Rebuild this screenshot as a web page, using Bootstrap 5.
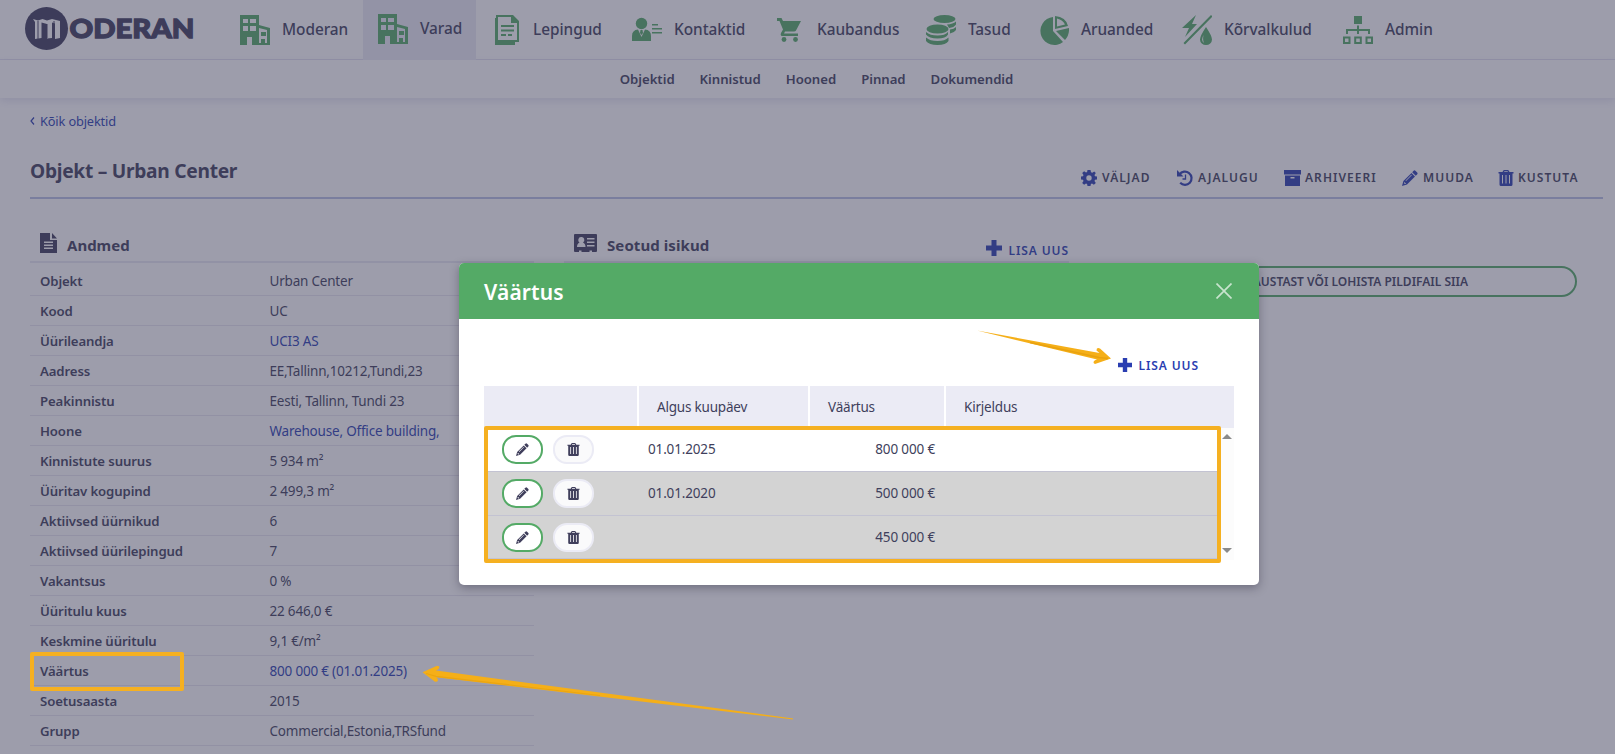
<!DOCTYPE html>
<html lang="et">
<head>
<meta charset="utf-8">
<title>Moderan</title>
<link href="https://cdn.jsdelivr.net/npm/bootstrap@5.3.0/dist/css/bootstrap.min.css" rel="stylesheet">
<style>
:root{--ink:#403f5c;--leaf:#54aa66;--royal:#2a3eb1;--rule:#e9e8f3;--amber:#f5b021}
body{font-family:"Noto Sans","Open Sans",sans-serif;font-size:13.5px;line-height:20px;color:var(--ink);background:#fff;height:754px;overflow:hidden;position:relative}
a{color:var(--royal);text-decoration:none}
svg{display:block;flex:none}
.topbar{height:60px;border-bottom:1px solid #e6e5f2}
.brand{width:225px;padding:7px 0 0 25px}
.mainnav{display:grid;grid-template-columns:138px 113px 141px 143px 151px 113px 143px 161px 121px;height:59px}
.mainnav a{display:flex;align-items:center;gap:12px;padding:0 0 1px 15px;color:var(--ink);font-weight:500;font-size:15.4px;letter-spacing:-.05px;white-space:nowrap}
.mainnav a.active{background:#eaebf5;height:60px;padding-bottom:2px}
.mainnav svg{fill:var(--leaf)}
.subnav{height:38px;padding-left:18px;gap:25px;box-shadow:0 3px 8px rgba(90,90,170,.16)}
.subnav a{color:var(--ink);font-weight:600;font-size:13.2px;letter-spacing:-.03px}
.content{padding:0 12px 0 30px}
.crumb{padding-top:13px;height:54px;font-size:12.8px;letter-spacing:-.15px}
.titlebar{height:47px;border-bottom:2px solid #b9c0e4}
.titlebar h1{font-size:19.2px;font-weight:700;line-height:24px;margin:7px 0 0;letter-spacing:-.28px}
.tools{padding:16px 25px 0 0}
.tools a,.addlink,.dropbtn{font-weight:600;font-size:12px;letter-spacing:.9px;color:var(--ink)}
.tools a{display:grid;grid-template-columns:16px 1fr;gap:5px;align-items:center;height:20px;white-space:nowrap;letter-spacing:1.05px}
.tools svg{fill:var(--royal)}
.panels{display:grid;grid-template-columns:504px 505px 478px;column-gap:30px;margin-top:34px}
.panel-head{height:30px;border-bottom:2px solid var(--rule);padding-left:10px;font-weight:700;font-size:15px}
.facts{margin:0;padding-top:3px}
.facts>div{height:30px;border-bottom:1px solid #e8e7f1;padding:5px 0 0 10px;display:flex}
.facts dt{width:229.5px;font-weight:600;font-size:13.2px;letter-spacing:-.12px}
.facts dd{margin:0;letter-spacing:-.2px}
.addlink.addlink{color:var(--royal)}
.dropbtn{height:31px;border:2px solid var(--leaf);border-radius:16px;margin-top:33px;letter-spacing:0;font-size:12px;padding:4px 0 0 144px;white-space:nowrap}
.backdrop-veil{position:absolute;inset:0;background:#3c3b57;opacity:.5}
.dialog-wrap{position:absolute;left:459px;top:263px;width:800px;height:322px;box-shadow:0 3px 10px rgba(30,28,50,.36);border-radius:5px;background:#fff;color:var(--ink)}
.dialog-head{background:var(--leaf);height:56px;border-radius:5px 5px 0 0;padding:0 27px 0 25px}
.dialog-head h2{font-size:21px;font-weight:600;color:#fff;margin:4px 0 0;letter-spacing:.15px}
.dialog-body{padding:36px 25px 0}
.dialog-body .addlink{height:20px;padding-right:35px;margin-bottom:11px}
.dialog-body .addlink span{padding:2px 0 0 6px}
.grid-head,.grid-row{display:grid}
.grid-head{gap:2px;height:42px;grid-template-columns:153px 169px 134px 1fr}
.grid-head>div{background:#ebebf5;padding:11px 0 0 18px;letter-spacing:-.2px}
.grid-row{height:44px;border-bottom:1px solid #c3c3d2;align-items:center;width:736px;padding-bottom:1px;letter-spacing:-.15px;grid-template-columns:164px 180px 107px 1fr}
.grid-row.past{background:#d3d3d3}
.grid-row:last-child{height:43px;padding-bottom:0}
.row-tools{display:flex;gap:10px;padding-left:18px}
.pill{width:41px;height:29px;border:2px solid var(--leaf);border-radius:14px;background:#fff;display:flex;align-items:center;justify-content:center;padding:0}
.pill.soft{border-color:#ebebf5;background:#fafafb}
.pill svg{fill:var(--ink)}
.scroller{width:14px;height:132px;background:#fcfcfc;padding:6px 0 7px 2px}
.ring{position:absolute;border:4px solid var(--amber);border-radius:2px}
.ring-grid{left:484px;top:426px;width:737px;height:137px}
.ring-fact{left:30px;top:652px;width:154px;height:39px}
.arrows{position:absolute;inset:0}
</style>
<script src="https://cdn.jsdelivr.net/npm/bootstrap@5.3.0/dist/js/bootstrap.bundle.min.js"></script>
</head>
<body>
<svg width="0" height="0" class="position-absolute">
<defs>
<symbol id="i-building" viewBox="0 0 30 30"><path fill-rule="evenodd" d="M0 0H19V10L30 13V30H12V22H7V30H0ZM3 4V8H8V4ZM10 4V8H16V4ZM3 11V16H8V11ZM10 11V16H16V11ZM19 13V28H21V24H25V28H27V15ZM21 17H26V21H21Z"/></symbol>
<symbol id="i-pencil" viewBox="0 0 16 16"><path fill-rule="evenodd" d="M11.600.8Q12.600-.1 13.600.9L15.200 2.500Q16 3.500 15.100 4.400L13.700 5.800 10.200 2.300ZM9.500 3 13 6.500 5 14.600 0 16 1.400 11ZM2.300 12 2 13.200 2.900 14 4.200 13.700ZM9.300 4.800 3.500 10.600 4 11.100 9.800 5.300Z"/></symbol>
<symbol id="i-trash" viewBox="0 0 16 16"><path fill-rule="evenodd" d="M4.500 2 5.300.5Q5.600 0 6.200 0H9.800Q10.400 0 10.700.5L11.500 2H15.500V3.500H14.500V14.500Q14.500 16 13 16H3Q1.500 16 1.500 14.500V3.500H.5V2ZM6 2H10L9.500 1.200H6.500ZM4 5V13.500H5V5ZM7.500 5V13.500H8.500V5ZM11 5V13.500H12V5Z"/></symbol>
<symbol id="i-plus" viewBox="0 0 16 16"><path d="M5.500 0H10.500V5.500H16V10.500H10.500V16H5.500V10.500H0V5.500H5.500Z"/></symbol>
</defs>
</svg>

<header>
<div class="topbar d-flex">
<div class="brand">
<svg width="172" height="44" viewBox="0 0 172 44"><circle cx="21.500" cy="21.500" r="21.500" fill="#3e3d5c"/><path fill="#fff" d="M8 12 13 13.500 17.500 12 22 13.500 27 12 35 14V31L30 32V16.500L27 15.500V31L22 31.500V17L16.500 15.500V31L10 32V15Z"/><path d="M13 14V32M22 17V31M29 14V31" stroke="#3e3d5c" stroke-width="1"/><text x="44.500" y="31" font-family="Lato,sans-serif" font-weight="900" font-size="27" textLength="125" lengthAdjust="spacingAndGlyphs" fill="#3e3d5c" stroke="#3e3d5c" stroke-width="1.300">ODERAN</text></svg>
</div>
<nav class="mainnav">
<a href="#"><svg width="30" height="30"><use href="#i-building"/></svg>Moderan</a>
<a href="#" class="active"><svg width="30" height="30"><use href="#i-building"/></svg>Varad</a>
<a href="#"><svg width="30" height="30" viewBox="0 0 30 30"><path fill-rule="evenodd" d="M5 0H22L28 6V27H24V30H4V3H5ZM7 2V25H26V8H20V2ZM10 10H23V12H10ZM10 14.500H23V16.500H10ZM10 19H15V21H10ZM17 19H21V21H17Z"/></svg>Lepingud</a>
<a href="#"><svg width="30" height="30" viewBox="0 0 30 30"><circle cx="9.500" cy="8.500" r="5.700"/><path d="M0 26V21Q0 15 6 14.500L9.500 22 13 14.500Q19 15 19 21V26ZM8.500 15H10.500L11 18 9.500 20 8 18ZM20 9H26V10.500H20ZM20 13H30V14.500H20ZM20 17H30V18.500H20Z"/></svg>Kontaktid</a>
<a href="#"><svg width="30" height="30" viewBox="2 0 30 30"><path fill-rule="evenodd" d="M4 3H8.500L10 6H28L23 15.500Q22.500 16.500 21 16.500H12L11 18.500H25V21H9Q7 20.500 8 18L10 14.500 6.500 6H4Z"/><circle cx="11" cy="24.500" r="2.400"/><circle cx="22.500" cy="24.500" r="2.400"/></svg>Kaubandus</a>
<a href="#"><svg width="30" height="30" viewBox="0 0 30 30"><ellipse cx="18.500" cy="4" rx="11" ry="4"/><ellipse cx="11.500" cy="14" rx="11" ry="4.500"/><path d="M0 17Q4 20.500 11.500 20.500T22 17V19.500Q20 23.500 11.500 23.500T0 19.500ZM0 22.500Q4 26 11.500 26T22.500 22.500V26Q20 30 11.500 30T0 26ZM21 9.500Q27 9 30 6.500V9.500Q28 12.500 23 13ZM24 14.500Q28 14 30 12V15Q28 18 24 18.500Z"/></svg>Tasud</a>
<a href="#"><svg width="30" height="30" viewBox="0 0 30 30"><path fill-rule="evenodd" d="M14 2V16L24 27A14 14 0 1 1 14 2ZM16 1Q27 2 29 11L16 14ZM18 3.500V11.500L26 9.500Q24 5 18 3.500ZM17 16 30 13Q30.500 20 26 25Z"/></svg>Aruanded</a>
<a href="#"><svg width="30" height="30" viewBox="0 0 30 30"><path fill-rule="evenodd" d="M14 0 10 9H15L3 22 7 13H0ZM29 0 30.500 1.500 3 29.500 1.500 28ZM24 12Q30 21 30 24.500A6 5.500 0 0 1 18 24.500Q18 21 24 12ZM21.500 20Q18.500 25.500 22 28 20.500 25 21.500 20Z"/></svg>Kõrvalkulud</a>
<a href="#"><svg width="30" height="30" viewBox="0 0 30 30"><path fill-rule="evenodd" d="M11 1H19V9H11ZM14 10.500H16V14H27V19H25V16H16V19H14V16H5V19H3V14H14ZM0 21.500H7.500V29H0ZM2 23.500V27H5.500V23.500ZM11.200 21.500H18.800V29H11.200ZM13.200 23.500V27H16.800V23.500ZM22.500 21.500H30V29H22.500ZM24.500 23.500V27H28V23.500Z"/></svg>Admin</a>
</nav>
</div>
<nav class="subnav d-flex justify-content-center align-items-center">
<a href="#">Objektid</a><a href="#">Kinnistud</a><a href="#">Hooned</a><a href="#">Pinnad</a><a href="#">Dokumendid</a>
</nav>
</header>

<main class="content">
<div class="crumb"><a href="#" class="d-flex align-items-center"><svg width="10" height="10" viewBox="0 0 10 10"><path d="M4 1.500 1 5 4 8.500" fill="none" stroke="#2a3eb1" stroke-width="1.200"/></svg>Kõik objektid</a></div>
<div class="titlebar d-flex justify-content-between">
<h1>Objekt – Urban Center</h1>
<nav class="tools d-flex">
<a href="#" style="width:96px"><svg width="16" height="16" viewBox="0 0 16 16"><path fill-rule="evenodd" d="M6.500 0H9.500L10 2.200 11.300 2.700 13.200 1.500 14.800 3.100 13.500 5 14 6.200 16 6.600V9.400L14 9.800 13.500 11 14.800 12.900 12.900 14.800 11 13.500 9.900 14 9.500 16H6.500L6.100 14 5 13.500 3.100 14.800 1.200 12.900 2.500 11 2 9.800 0 9.400V6.600L2 6.200 2.500 5 1.200 3.100 3.100 1.200 5 2.500 6.100 2ZM8 5.300A2.700 2.700 0 1 0 8 10.700 2.700 2.700 0 0 0 8 5.300Z"/></svg>VÄLJAD</a>
<a href="#" style="width:107px"><svg width="16" height="16" viewBox="0 0 16 16"><path d="M2.500 4.500A6.600 6.600 0 1 1 3.200 12.800" fill="none" stroke="#2a3eb1" stroke-width="2.200"/><path d="M0 0V6.500H6.500Z"/><path d="M8.500 4.500V9H5.500" fill="none" stroke="#2a3eb1" stroke-width="1.300"/></svg>AJALUGU</a>
<a href="#" style="width:118px"><svg width="17" height="16" viewBox="0 0 17 16"><path fill-rule="evenodd" d="M0 0H17V4.500H0ZM1 5.500H16V16H1ZM6.500 7V8.500H10.500V7Z"/></svg>ARHIVEERI</a>
<a href="#" style="width:96px"><svg width="16" height="16"><use href="#i-pencil"/></svg>MUUDA</a>
<a href="#" style="width:80px"><svg width="16" height="16"><use href="#i-trash"/></svg><span style="margin-left:-1px">KUSTUTA</span></a>
</nav>
</div>
<div class="panels">
<section>
<div class="panel-head d-flex"><svg width="17" height="20" viewBox="0 0 17 20" class="mt-0"><path fill="#3e3d5c" fill-rule="evenodd" d="M0 0H10V7H17V20H0ZM12 0 17 5.500H12ZM4 8.500V10H13V8.500ZM4 11.500V13H13V11.500ZM4 14.500V16H13V14.500Z"/></svg><span style="padding:2px 0 0 10px">Andmed</span></div>
<dl class="facts">
<div><dt>Objekt</dt><dd>Urban Center</dd></div>
<div><dt>Kood</dt><dd>UC</dd></div>
<div><dt>Üürileandja</dt><dd><a href="#">UCI3 AS</a></dd></div>
<div><dt>Aadress</dt><dd>EE,Tallinn,10212,Tundi,23</dd></div>
<div><dt>Peakinnistu</dt><dd>Eesti, Tallinn, Tundi 23</dd></div>
<div><dt>Hoone</dt><dd><a href="#">Warehouse, Office building,</a></dd></div>
<div><dt>Kinnistute suurus</dt><dd>5 934 m²</dd></div>
<div><dt>Üüritav kogupind</dt><dd>2 499,3 m²</dd></div>
<div><dt>Aktiivsed üürnikud</dt><dd>6</dd></div>
<div><dt>Aktiivsed üürilepingud</dt><dd>7</dd></div>
<div><dt>Vakantsus</dt><dd>0 %</dd></div>
<div><dt>Üüritulu kuus</dt><dd>22 646,0 €</dd></div>
<div><dt>Keskmine üüritulu</dt><dd>9,1 €/m²</dd></div>
<div><dt>Väärtus</dt><dd><a href="#">800 000 € (01.01.2025)</a></dd></div>
<div><dt>Soetusaasta</dt><dd>2015</dd></div>
<div><dt>Grupp</dt><dd>Commercial,Estonia,TRSfund</dd></div>
</dl>
</section>
<section>
<div class="panel-head d-flex"><svg width="23" height="19" viewBox="0 -1 23 19"><path fill="#3e3d5c" fill-rule="evenodd" d="M1 0H22Q23 0 23 1V17Q23 18 22 18H18V16.500H15.500V18H7.500V16.500H5V18H1Q0 18 0 17V1Q0 0 1 0ZM7 3A2.800 3 0 0 0 5.500 8.500Q3 9.500 3 13H11.500Q11.500 9.500 9 8.500A2.800 3 0 0 0 7 3ZM13 4V5.500H20.500V4ZM13 7.500V9H20.500V7.500ZM13 11V12.500H20.500V11Z"/></svg><span style="padding:2px 0 0 10px;letter-spacing:.08px">Seotud isikud</span>
<a class="addlink ms-auto d-flex" href="#" style="padding-top:7px"><svg width="16" height="16" fill="#2a3eb1"><use href="#i-plus"/></svg><span style="padding:0 0 0 6px;line-height:21px">LISA UUS</span></a></div>
</section>
<section><div class="dropbtn">KAUSTAST VÕI LOHISTA PILDIFAIL SIIA</div></section>
</div>
</main>

<div class="backdrop-veil"></div>
<div class="dialog-wrap">
<div class="dialog-head d-flex justify-content-between align-items-center"><h2>Väärtus</h2><svg width="16" height="16" viewBox="0 0 16 16" stroke="#fff" stroke-opacity=".68" stroke-width="1.700"><path d="M.5.500 15.500 15.500M15.500.5.500 15.500"/></svg></div>
<div class="dialog-body">
<a class="addlink d-flex justify-content-end align-items-center" href="#"><svg width="14" height="14" fill="#2a3eb1"><use href="#i-plus"/></svg><span>LISA UUS</span></a>
<div class="grid-head"><div></div><div>Algus kuupäev</div><div>Väärtus</div><div>Kirjeldus</div></div>
<div class="d-flex">
<div>
<div class="grid-row"><div class="row-tools"><button class="pill"><svg width="13" height="13"><use href="#i-pencil"/></svg></button><button class="pill soft"><svg width="13" height="13"><use href="#i-trash"/></svg></button></div><div>01.01.2025</div><div class="text-end">800 000 €</div></div>
<div class="grid-row past"><div class="row-tools"><button class="pill"><svg width="13" height="13"><use href="#i-pencil"/></svg></button><button class="pill soft"><svg width="13" height="13"><use href="#i-trash"/></svg></button></div><div>01.01.2020</div><div class="text-end">500 000 €</div></div>
<div class="grid-row past"><div class="row-tools"><button class="pill"><svg width="13" height="13"><use href="#i-pencil"/></svg></button><button class="pill soft"><svg width="13" height="13"><use href="#i-trash"/></svg></button></div><div></div><div class="text-end">450 000 €</div></div>
</div>
<div class="scroller d-flex flex-column justify-content-between"><svg width="10" height="5" fill="#8a8a8a"><path d="M5 0 10 5H0Z"/></svg><svg width="10" height="5" fill="#8a8a8a"><path d="M0 0H10L5 5Z"/></svg></div>
</div>
</div>
</div>
<div class="ring ring-grid"></div>
<div class="ring ring-fact"></div>
<svg class="arrows" width="1615" height="754" viewBox="0 0 1615 754">
<g fill="#f5af18"><path d="M977 330.500 1099.500 353 1096.500 350.500Q1096.500 347 1100 348.500L1111 358.500 1095 364Q1092 362.500 1095 360.300L1097 359.500Z"/>
<path d="M793 718.500 436 670.500 438.500 669Q441 665.500 436.500 666L422.500 672.300 435 681.800Q439 682 437.500 678.500L436 677.300 793 719.500Z"/></g>
<path d="M1030 342.500 1099 357.500 1108 358.500" stroke="#e9a20f" stroke-width="1.500" fill="none"/>
<path d="M426 673.500 436 676.300 600 695.500" stroke="#eba510" stroke-width="1.200" fill="none"/>
</svg>
</body>
</html>
